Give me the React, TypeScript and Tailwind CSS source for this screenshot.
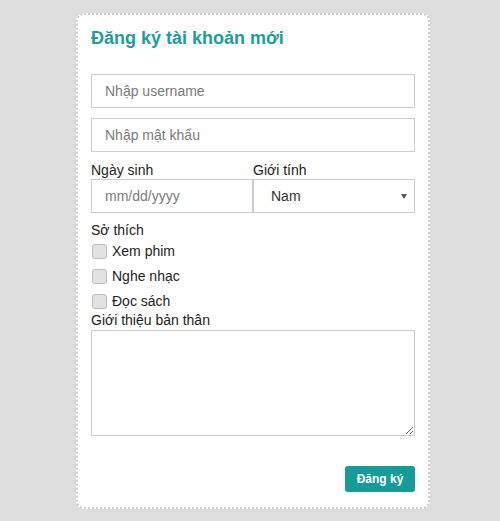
const font = { fontFamily: '"Liberation Sans", Arial, sans-serif' };

const hobbies = ['Xem phim', 'Nghe nhạc', 'Đọc sách'];

function Field({ placeholder }: { placeholder: string }) {
  return (
    <div className="h-[34px] border border-[#cccccc] bg-white flex items-center pl-[13px] text-[14px] text-[#7a7a7a]">
      {placeholder}
    </div>
  );
}

export default function App() {
  return (
    <div className="min-h-[521px] bg-[#dddddd] pl-[76px] pt-[13px] pb-[14px]" style={font}>
      <div className="w-[354px] bg-white border-2 border-dotted border-[#cfcfcf] rounded-lg px-[13px] pt-[13px] pb-[15px]">
        {/* Tiêu đề */}
        <h2 className="text-[18px] leading-[21px] font-bold text-[#1a9e9e]">Đăng ký tài khoản mới</h2>

        <div className="mt-[25px] space-y-[10px]">
          <Field placeholder="Nhập username" />
          <Field placeholder="Nhập mật khẩu" />
        </div>

        {/* Ngày sinh + giới tính */}
        <div className="mt-[10px] grid grid-cols-2 text-[14px] text-[#222]">
          <div>
            <div className="leading-[17px]">Ngày sinh</div>
            <Field placeholder="mm/dd/yyyy" />
          </div>
          <div>
            <div className="leading-[17px]">Giới tính</div>
            <div className="h-[34px] border border-[#cccccc] bg-white flex items-center justify-between pl-[17px] pr-[7px] text-[#333]">
              <span>Nam</span>
              <svg width="6" height="5" viewBox="0 0 6 5">
                <path d="M0 0 L6 0 L3 5 Z" fill="#555" />
              </svg>
            </div>
          </div>
        </div>

        {/* Sở thích */}
        <div className="mt-[9px] text-[14px] text-[#222]">
          <div className="leading-[17px]">Sở thích</div>
          <div>
            {hobbies.map((h) => (
              <label key={h} className="h-[25px] flex items-center gap-[5px] pl-px">
                <span className="w-[15px] h-[15px] rounded-[3px] border border-[#bdbdbd] bg-[#e2e2e2]" />
                <span>{h}</span>
              </label>
            ))}
          </div>
        </div>

        {/* Giới thiệu */}
        <div className="mt-[-2px] text-[14px] text-[#222]">
          <div className="leading-[17px]">Giới thiệu bản thân</div>
          <textarea
            readOnly
            className="mt-px block w-full h-[106px] border border-[#cccccc] bg-white outline-none"
          />
        </div>

        <div className="mt-[30px] flex justify-end">
          <button className="w-[70px] h-[26px] rounded-[3px] bg-[#149c98] text-white text-[12px] font-bold">
            Đăng ký
          </button>
        </div>
      </div>
    </div>
  );
}
